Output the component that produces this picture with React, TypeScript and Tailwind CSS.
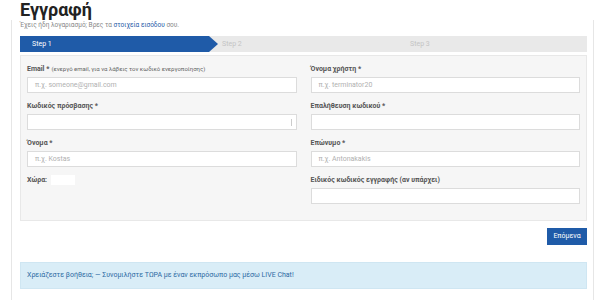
import React from 'react';

const font = { fontFamily: 'Roboto, "Noto Sans", sans-serif' };

function Field({ label, note, placeholder, lock }: { label: string; note?: string; placeholder?: string; lock?: boolean }) {
  return (
    <div className="flex flex-col">
      <label className="h-[10px] mb-[3px] flex items-center text-[7px] font-bold text-[#555] leading-none">
        {label}
        {note && <span className="ml-[2px] font-normal text-[6px] text-[#666]">{note}</span>}
      </label>
      <div className="relative h-[16px] bg-white border border-[#dcdcdc] flex items-center px-[7px] mb-[8px]">
        <span className="text-[7px] text-[#b0b0b0] leading-none">{placeholder}</span>
        {lock && <span className="absolute right-[4px] top-[4px] w-[1px] h-[7px] bg-[#ccc]" />}
      </div>
    </div>
  );
}

function App() {
  return (
    <div className="w-[600px] h-[300px] bg-white overflow-hidden" style={font}>
      {/* Title */}
      <h1 className="h-[20px] pl-[20px] pt-[1px] text-[18px] font-bold text-[#222] leading-none">Εγγραφή</h1>

      <div className="ml-[11px] w-[583px] h-[280px] border-l border-r border-[#e6e6e6] pl-[8px] pr-[6px]">
        <p className="h-[16px] pt-[1px] text-[6.5px] text-[#888] leading-[8px]">
          Έχεις ήδη λογαριασμό; Βρες τα <span className="text-[#1f5ba8]">στοιχεία εισόδου</span> σου.
        </p>

        {/* Steps */}
        <div className="grid grid-cols-3 h-[16px] bg-[#e9e9e9] text-[7px] leading-none">
          <div className="relative bg-[#1f5ba8] text-white flex items-center pl-[12px]">
            Step 1
            <svg className="absolute -right-[9px] top-0" width="9" height="16" viewBox="0 0 9 16">
              <polygon points="0,0 9,8 0,16" fill="#1f5ba8" />
            </svg>
          </div>
          <div className="flex items-center pl-[13px] text-[#c4c4c4]">Step 2</div>
          <div className="flex items-center pl-[12px] text-[#c4c4c4]">Step 3</div>
        </div>

        {/* Form panel */}
        <div className="mt-[3px] h-[166px] bg-[#f6f6f6] border border-[#e8e8e8] px-[6px] pt-[8px] grid grid-cols-2 gap-x-[14px]">
          <div className="flex flex-col">
            <Field label="Email *" note="(ενεργό email, για να λάβεις τον κωδικό ενεργοποίησης)" placeholder="π.χ. someone@gmail.com" />
            <Field label="Κωδικός πρόσβασης *" lock />
            <Field label="Όνομα *" placeholder="π.χ. Kostas" />
            <div className="flex items-center h-[10px] text-[7px] font-bold text-[#555] leading-none">
              Χώρα:
              <span className="ml-[4px] w-[24px] h-[10px] bg-white" />
            </div>
          </div>
          <div className="flex flex-col">
            <Field label="Όνομα χρήστη *" placeholder="π.χ. terminator20" />
            <Field label="Επαλήθευση κωδικού *" />
            <Field label="Επώνυμο *" placeholder="π.χ. Antonakakis" />
            <Field label="Ειδικός κωδικός εγγραφής (αν υπάρχει)" />
          </div>
        </div>

        <div className="flex justify-end mt-[7px]">
          <button className="w-[40px] h-[17px] bg-[#1f5ba8] text-white text-[7px] leading-none">Επόμενα</button>
        </div>

        <div className="mt-[17px] h-[27px] bg-[#d9edf7] border border-[#cfe6f2] flex items-center pl-[6px] text-[7px] text-[#2d6aa3]">
          Χρειάζεστε βοήθεια; — Συνομιλήστε ΤΩΡΑ με έναν εκπρόσωπο μας μέσω LIVE Chat!
        </div>
      </div>
    </div>
  );
}

export default App;
